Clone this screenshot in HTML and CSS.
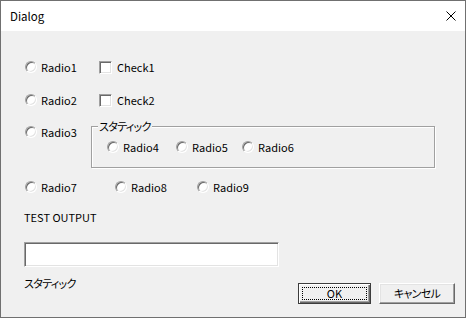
FILE: index.html
```html
<!DOCTYPE html>
<html lang="ja">
<head>
  <meta charset="UTF-8" />
  <title>Dialog</title>
  <link rel="stylesheet" href="styles.css">
</head>
<body>
  <div class="window">
    <div class="titlebar">
      <span class="title">Dialog</span>
      <svg class="close" width="10" height="10" viewBox="0 0 10 10">
        <path d="M0.5 0.5 L9.5 9.5 M9.5 0.5 L0.5 9.5" stroke="#000" stroke-width="1" fill="none" />
      </svg>
    </div>

    <div class="content">
      <div class="row first">
        <label class="ctl w74"><span class="radio"></span>Radio1</label>
        <label class="ctl"><span class="check"></span>Check1</label>
      </div>

      <div class="row second">
        <label class="ctl w74"><span class="radio"></span>Radio2</label>
        <label class="ctl"><span class="check"></span>Check2</label>
      </div>

      <div class="row third">
        <label class="ctl w66"><span class="radio"></span>Radio3</label>
        <div class="group">
          <span class="group-label jp">スタティック</span>
          <div class="row">
            <label class="ctl w69"><span class="radio"></span>Radio4</label>
            <label class="ctl w66"><span class="radio"></span>Radio5</label>
            <label class="ctl"><span class="radio"></span>Radio6</label>
          </div>
        </div>
      </div>

      <div class="row fourth">
        <label class="ctl w90"><span class="radio"></span>Radio7</label>
        <label class="ctl w82"><span class="radio"></span>Radio8</label>
        <label class="ctl"><span class="radio"></span>Radio9</label>
      </div>

      <div class="output-label">TEST OUTPUT</div>
      <input type="text" class="edit" />

      <div class="bottom">
        <span class="static jp">スタティック</span>
        <div class="buttons">
          <button class="btn default"><span class="focus">OK</span></button>
          <button class="btn jp">キャンセル</button>
        </div>
      </div>
    </div>
  </div>
</body>
</html>
```

FILE: styles.css
```css
body {
  margin: 0;
  background: #fff;
  font-family: "Noto Sans CJK JP", "Liberation Sans", sans-serif;
  font-size: 11px;
  color: #000;
}

.window {
  width: 466px;
  height: 318px;
  box-sizing: border-box;
  border: 1px solid #707070;
  background: #f0f0f0;
  display: flex;
  flex-direction: column;
}

.titlebar {
  height: 30px;
  background: #fff;
  display: flex;
  align-items: center;
  justify-content: space-between;
  padding: 0 9px 0 9px;
}
.title {
  font-size: 11.5px;
  line-height: 16px;
}
.close {
  display: block;
  margin-bottom: 1px;
}

.jp {
  font-feature-settings: "palt";
  letter-spacing: -0.7px;
}

.content {
  padding: 0 10px 0 24px;
  flex: 1;
}

.row {
  display: flex;
  align-items: center;
  height: 16px;
  line-height: 16px;
}
.row.first { margin-top: 28px; }
.row.second { margin-top: 17px; }
.row.third {
  margin-top: 16px;
  height: auto;
  align-items: flex-start;
}
.row.fourth { margin-top: 11px; }

.ctl {
  display: flex;
  align-items: center;
  gap: 4px;
  white-space: nowrap;
}
.w66 { width: 66px; }
.w69 { width: 69px; }
.w74 { width: 74px; }
.w82 { width: 82px; }
.w90 { width: 90px; }

.radio {
  width: 12px;
  height: 12px;
  box-sizing: border-box;
  border-radius: 50%;
  background: #fff;
  border: 1px solid;
  border-color: #a0a0a0 #fff #fff #a0a0a0;
  box-shadow: inset 1px 1px 0 #696969, inset -1px -1px 0 #e3e3e3;
}

.check {
  width: 13px;
  height: 13px;
  box-sizing: border-box;
  background: #fff;
  border: 1px solid;
  border-color: #a0a0a0 #fff #fff #a0a0a0;
  box-shadow: inset 1px 1px 0 #696969, inset -1px -1px 0 #e3e3e3;
  margin-right: 1px;
}

.group {
  position: relative;
  margin-top: 2px;
  width: 344px;
  height: 42px;
  box-sizing: border-box;
  border: 1px solid #a0a0a0;
  box-shadow: 1px 1px 0 #fff, inset 1px 1px 0 #fff;
  padding: 12px 0 0 15px;
}
.group-label {
  position: absolute;
  top: -9px;
  left: 6px;
  padding: 0 1px;
  background: #f0f0f0;
  line-height: 16px;
}

.output-label {
  margin: 14px 0 0 -1px;
  line-height: 16px;
}

.edit {
  display: block;
  margin: 17px 0 0 -1px;
  width: 255px;
  height: 25px;
  box-sizing: border-box;
  border: 1px solid;
  border-color: #a0a0a0 #fff #fff #a0a0a0;
  box-shadow: inset 1px 1px 0 #696969, inset -1px -1px 0 #e3e3e3;
  background: #fff;
  outline: none;
  padding: 0 4px;
}

.bottom {
  display: flex;
  justify-content: space-between;
  align-items: flex-start;
  margin-top: 8px;
}
.static {
  margin-left: -1px;
  line-height: 16px;
}

.buttons {
  display: flex;
  gap: 8px;
  margin-top: 8px;
}

.btn {
  height: 21px;
  width: 76px;
  box-sizing: border-box;
  font-family: inherit;
  font-size: 11px;
  line-height: 15px;
  color: #000;
  background: #f0f0f0;
  border: 1px solid;
  border-color: #fff #696969 #696969 #fff;
  box-shadow: inset -1px -1px 0 #a0a0a0, inset 1px 1px 0 #e3e3e3;
  padding: 0;
  display: flex;
  align-items: center;
  justify-content: center;
}
.btn.default {
  width: 73px;
  border: 1px solid #3c3c3c;
  box-shadow: inset 1px 1px 0 #fff, inset -1px -1px 0 #696969, inset -2px -2px 0 #a0a0a0;
  padding: 3px;
}
.focus {
  flex: 1;
  align-self: stretch;
  display: flex;
  align-items: center;
  justify-content: center;
  outline: 1px dotted #000;
  outline-offset: -1px;
}
```
